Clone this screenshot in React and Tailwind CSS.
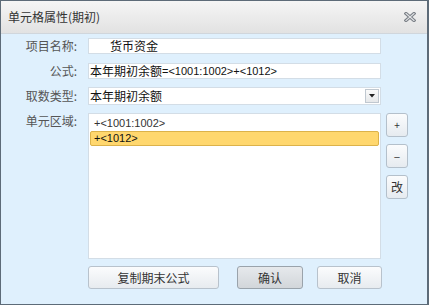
import React from "react";

const font = { fontFamily: '"Noto Sans CJK SC", "Noto Sans", sans-serif' };

function Asc({ children }) {
  return (
    <span className="text-[11px]" style={{ fontFamily: '"Liberation Sans", Arial, sans-serif' }}>
      {children}
    </span>
  );
}

function SideBtn({ children }) {
  return (
    <div className="w-[22px] h-[24px] flex items-center justify-center rounded-[3px] border border-[#b4c0cb] bg-gradient-to-b from-[#fbfcfd] to-[#e6ebf0] text-[12px] text-[#333] leading-none">
      {children}
    </div>
  );
}

export default function App() {
  return (
    <div
      className="w-[429px] h-[305px] flex flex-col border-l border-t border-r-2 border-b border-[#5d6b78] bg-[#dff0fd] overflow-hidden"
      style={font}
    >
      <div className="h-[33px] shrink-0 flex items-center justify-between pl-[7px] pr-[11px] bg-gradient-to-b from-[#f5f5f5] to-[#e2e2e2] border-b border-[#d0d6dc]">
        <span className="text-[12px] text-[#333]">单元格属性(期初)</span>
        <svg width="12" height="10" viewBox="0 0 12 10">
          <path d="M2 1.5 L10 8.5 M10 1.5 L2 8.5" stroke="#7a7f86" strokeWidth="3.2" strokeLinecap="square" />
          <path d="M2 1.5 L10 8.5 M10 1.5 L2 8.5" stroke="#e4e6e8" strokeWidth="1.1" strokeLinecap="square" />
        </svg>
      </div>
      <div className="flex flex-col pt-[4px] text-[12px]">
        <div className="flex items-center h-[16px]">
          <div className="w-[76px] text-right text-[#555]">项目名称:</div>
          <div className="ml-[11px] w-[293px] h-[16px] bg-white border border-[#d3dde6] flex items-center pl-[21px] text-[#111] leading-none">
            货币资金
          </div>
        </div>
        <div className="flex items-center h-[16px] mt-[9px]">
          <div className="w-[76px] text-right text-[#555]">公式:</div>
          <div className="ml-[11px] w-[293px] h-[16px] bg-white border border-[#d3dde6] flex items-center pl-[1px] text-[#111] leading-none whitespace-nowrap">
            本年期初余额<Asc>=&lt;1001:1002&gt;+&lt;1012&gt;</Asc>
          </div>
        </div>
        <div className="flex items-center h-[18px] mt-[8px]">
          <div className="w-[76px] text-right text-[#555]">取数类型:</div>
          <div className="ml-[11px] w-[293px] h-[18px] bg-white border border-[#d3dde6] flex items-center justify-between pl-[1px] pr-[1px] text-[#111] leading-none">
            <span>本年期初余额</span>
            <div className="w-[14px] h-[14px] border border-[#c0c8d0] bg-gradient-to-b from-[#fafafa] to-[#e6e8ea] flex items-center justify-center">
              <svg width="6" height="4" viewBox="0 0 6 4">
                <path d="M0 0 L6 0 L3 3.5 Z" fill="#222" />
              </svg>
            </div>
          </div>
        </div>
        <div className="flex items-start mt-[8px]">
          <div className="w-[76px] text-right text-[#555] leading-none pt-[2px]">单元区域:</div>
          <div className="ml-[11px] w-[293px] h-[146px] bg-white border border-[#d3dde6] p-[1px] flex flex-col">
            <div className="h-[16px] flex items-center pl-[4px] text-[#333] leading-none">
              <Asc>+&lt;1001:1002&gt;</Asc>
            </div>
            <div className="h-[15px] flex items-center pl-[3px] text-[#111] leading-none bg-[#ffd76e] border border-[#dcb24a] rounded-[2px]">
              <Asc>+&lt;1012&gt;</Asc>
            </div>
          </div>
          <div className="ml-[5px] flex flex-col gap-[7px]">
            <SideBtn>
              <span className="text-[10px]">+</span>
            </SideBtn>
            <SideBtn>–</SideBtn>
            <SideBtn>改</SideBtn>
          </div>
        </div>
        <div className="flex mt-[7px] ml-[87px]">
          <div className="w-[131px] h-[23px] flex items-center justify-center rounded-[3px] border border-[#b8c2cc] bg-gradient-to-b from-[#fbfcfd] to-[#e7ebef] text-[#333]">
            复制期末公式
          </div>
          <div className="ml-[18px] w-[66px] h-[23px] flex items-center justify-center rounded-[3px] border border-[#9aa3ab] bg-gradient-to-b from-[#e6e9ec] to-[#d2d6da] text-[#333]">
            确认
          </div>
          <div className="ml-[14px] w-[65px] h-[23px] flex items-center justify-center rounded-[3px] border border-[#b8c2cc] bg-gradient-to-b from-[#fbfcfd] to-[#e7ebef] text-[#333]">
            取消
          </div>
        </div>
      </div>
    </div>
  );
}
